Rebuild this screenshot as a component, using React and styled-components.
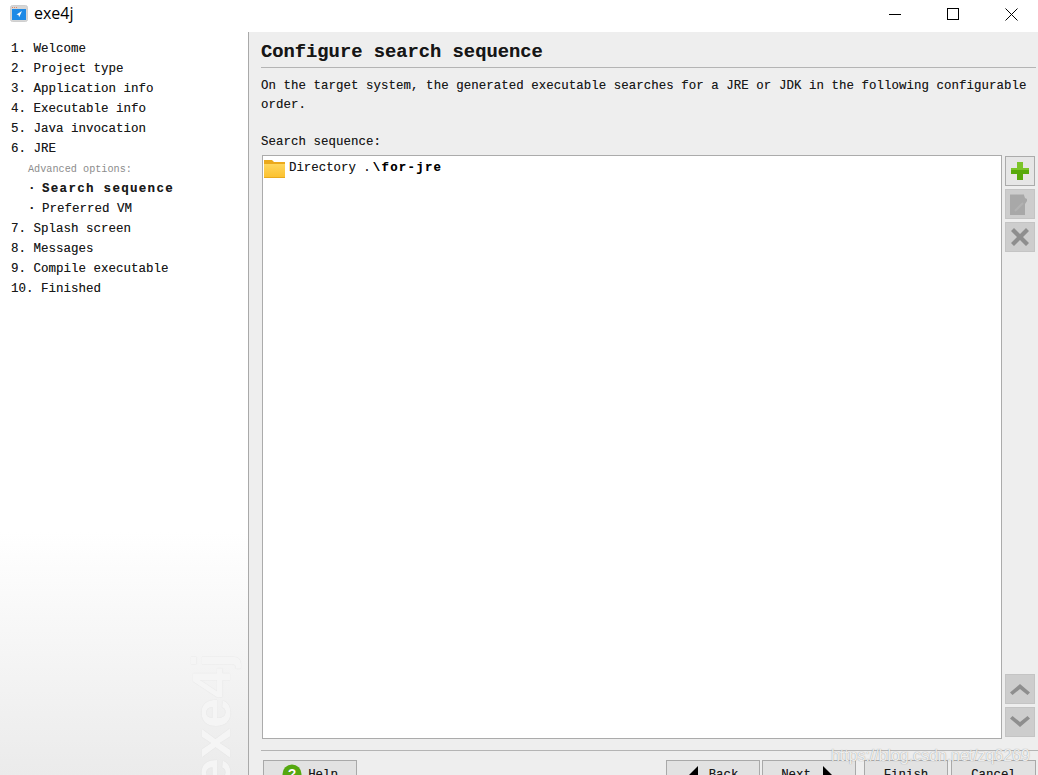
import React from "react";
import styled, { createGlobalStyle } from "styled-components";

const Global = createGlobalStyle`
  html, body { margin: 0; padding: 0; background: #fff; }
  #root { height: 775px; overflow: hidden; }
`;
const mono = `"Liberation Mono", "DejaVu Sans Mono", monospace`;

const Window = styled.div`
  position: relative; width: 1038px; height: 775px; overflow: hidden;
  display: flex; flex-direction: column; background: #fff;
`;
const TitleBar = styled.header`
  height: 32px; flex: none; display: flex; align-items: center; padding: 0 0 4px 10px; box-sizing: border-box;
  font: 16px "Open Sans", "Liberation Sans", sans-serif; color: #000;
`;
const AppName = styled.span`margin: 0 0 3px 6px; flex: 1;`;
const WinButton = styled.div`
  width: 58px; height: 28px; display: flex; align-items: center; justify-content: center;
`;
const WinButtons = styled.div`display: flex; margin-right: -2px; width: 174px;`;
const Body = styled.div`flex: 1; display: flex; min-height: 0;`;
const Sidebar = styled.nav`
  position: relative; width: 249px; flex: none; box-sizing: border-box; overflow: hidden;
  padding: 7px 0 0 11px; border-right: 1px solid #a9a9a9;
  background: linear-gradient(to bottom, #fff 0, #fff 500px, #ebebeb 100%);
`;
const Step = styled.div`
  height: 20px; white-space: pre; color: #1a1a1a; display: flex;
  font: ${p => (p.$active ? "bold" : "normal")} 12.5px/21px ${mono};
  letter-spacing: ${p => (p.$active ? 1.3 : 0)}px;
  padding-left: ${p => (p.$sub ? 17 : 0)}px;
  text-shadow: 0 0 .6px rgba(0,0,0,.45);
`;
const Dot = styled.span`width: 14px; flex: none; font-weight: bold;`;
const Caption = styled.div`
  height: 20px; padding-left: 17px; color: #8c8c8c; font: 10.2px/21px ${mono};
`;
const Watermark = styled.div`
  position: absolute; left: 184px; top: 621px;
  writing-mode: vertical-rl; transform: rotate(180deg);
  font: bold 54px/54px "Liberation Sans", sans-serif; color: #f5f5f5;
  text-shadow: 0 0 1px rgba(0,0,0,.1);
  white-space: nowrap;
`;
const Main = styled.main`
  flex: 1; background: #eeeeee; padding: 0 0 0 12px; min-width: 0; overflow: hidden;
  display: flex; flex-direction: column;
`;
const Heading = styled.h1`
  margin: 9px 2px 0 0; padding-bottom: 4px; height: 22px; border-bottom: 1px solid #b4b4b4; flex: none;
  font: bold 18.8px/22px ${mono}; color: #161616; text-shadow: 0 0 .5px rgba(0,0,0,.4);
`;
const Intro = styled.p`
  margin: 9px 0 0; width: 776px; font: 12.4px/18.5px ${mono}; color: #1a1a1a; flex: none;
  letter-spacing: .07px; text-shadow: 0 0 .6px rgba(0,0,0,.45);
`;
const ListLabel = styled.div`
  margin-top: 19px; font: 12.4px/19px ${mono}; color: #1a1a1a; height: 22px; flex: none;
  letter-spacing: .07px; text-shadow: 0 0 .6px rgba(0,0,0,.45);
`;
const ListRow = styled.div`display: flex; gap: 3px; flex: none; margin-left: 1px;`;
const List = styled.div`
  width: 738px; height: 582px; background: #fff; border: 1px solid #ababab;
`;
const ListItem = styled.div`
  display: flex; align-items: center; height: 20px; margin-top: 2px; padding-left: 1px;
  font: 12.4px/22px ${mono}; color: #1a1a1a; white-space: pre; text-shadow: 0 0 .6px rgba(0,0,0,.45);
`;
const ItemText = styled.span`margin-left: 4px;`;
const Strong = styled.b`font-weight: bold; color: #000; letter-spacing: 1.25px; margin-left: 2px;`;
const Tools = styled.div`display: flex; flex-direction: column; width: 30px; margin: 1px 0 2px;`;
const ToolGroup = styled.div`display: flex; flex-direction: column; gap: 3px;`;
const Spacer = styled.div`flex: 1;`;
const Tool = styled.div`
  width: 30px; height: 30px; box-sizing: border-box; display: flex; align-items: center; justify-content: center;
  background: ${p => (p.$on ? "#e6e6e6" : "#cdcdcd")};
  border: 1px solid ${p => (p.$on ? "#ababab" : "#c4c4c4")};
`;
const Footer = styled.div`
  margin: 11px 0 0; border-top: 1px solid #b4b4b4; padding-top: 9px; display: flex; height: 50px; box-sizing: border-box;
  flex: none;
`;
const Button = styled.div`
  height: 40px; box-sizing: border-box; width: ${p => p.$w}px; margin-left: ${p => p.$ml || 0}px; flex: none;
  display: flex; align-items: flex-start; justify-content: center; gap: ${p => p.$gap ?? 6}px;
  padding: 5px ${p => p.$pr || 0}px 0 0;
  background: #e2e2e2; border: 1px solid #a9a9a9; border-bottom: none;
  font: 12.4px/18px ${mono}; color: #1a1a1a; text-shadow: 0 0 .6px rgba(0,0,0,.45);
`;
const HelpGlyph = styled.span`display: block; margin-top: -2px; height: 20px;`;
const Stamp = styled.div`
  position: absolute; left: 831px; top: 744px;
  font: 16px/24px "Liberation Sans", sans-serif; color: rgba(255,255,255,.85);
  text-shadow: 0 0 1px rgba(110,110,110,.8); white-space: nowrap; letter-spacing: -.05px;
`;

const steps1 = ["1. Welcome","2. Project type","3. Application info","4. Executable info","5. Java invocation","6. JRE"];
const steps2 = ["7. Splash screen","8. Messages","9. Compile executable","10. Finished"];

const AppIcon = () => (
  <svg width="18" height="18" viewBox="0 0 18 18">
    <rect x="0.5" y="0.5" width="17" height="16" rx="2" fill="#d6d6d6" stroke="#cfcfcf" />
    <rect x="2" y="4" width="14" height="11" fill="#1e8ae6" />
    <path d="M2 2.5h5" stroke="#e08a6a" strokeDasharray="1 1" />
    <path d="M12 6 6.500 9.400l2 .7.6 2.200z" fill="#fff" />
  </svg>
);
const Minimize = () => <svg width="12" height="12"><path d="M0 6.500h12" stroke="#000" /></svg>;
const Maximize = () => <svg width="12" height="12"><rect x=".5" y=".5" width="11" height="11" fill="none" stroke="#000" /></svg>;
const Close = () => <svg width="13" height="13"><path d="M.5.500l12 12M12.500.500l-12 12" stroke="#000" /></svg>;
const Folder = () => (
  <svg width="21" height="19" viewBox="0 0 21 19">
    <defs>
      <linearGradient id="folderFill" x1="0" y1="0" x2="0" y2="1">
        <stop offset="0" stopColor="#ffd65c" />
        <stop offset="1" stopColor="#fbc02d" />
      </linearGradient>
    </defs>
    <path d="M0 1h8l2 2h11v16H0z" fill="#eba91c" />
    <path d="M0 5h21v14H0z" fill="url(#folderFill)" />
    <path d="M0 18h21v1H0z" fill="#e8a91e" />
  </svg>
);
const Plus = () => (
  <svg width="20" height="20" viewBox="0 0 20 20">
    <path d="M7 1h6v6h6v6h-6v6H7v-6H1V7h6z" fill="#57a90c" />
    <path d="M7 1h6v6h6v2H7zM1 7h6v2H1z" fill="#7cc42a" />
  </svg>
);
const Note = () => (
  <svg width="22" height="24" viewBox="0 0 22 24">
    <path d="M1 3l1-1 1 1 1-1 1 1 1-1 1 1 1-1 1 1 1-1 1 1 1-1 1 1 1-1 1 1 1 3 2 1v2l-2 3v11H1z" fill="#a8a8a8" />
    <path d="M6 19 14 11" stroke="#b2b2b2" strokeWidth="2" />
  </svg>
);
const Cross = () => <svg width="22" height="22" viewBox="0 0 22 22"><path d="M2 5l3-3 6 6 6-6 3 3-6 6 6 6-3 3-6-6-6 6-3-3 6-6z" fill="#8e8e8e" /></svg>;
const Up = () => <svg width="22" height="14" viewBox="0 0 22 14"><path d="M1 10.500 11 2l10 8.500-2.500 2.500L11 7l-7.500 6z" fill="#8e8e8e" /></svg>;
const Down = () => <svg width="22" height="14" viewBox="0 0 22 14"><path d="M1 3.500 11 12l10-8.500L18.500 1 11 7 3.500 1z" fill="#8e8e8e" /></svg>;
const Help = () => (
  <HelpGlyph>
    <svg width="20" height="20" viewBox="0 0 20 20">
      <circle cx="10" cy="10" r="9.500" fill="#55a80f" />
      <text x="10" y="15" textAnchor="middle" fontFamily="Liberation Sans" fontWeight="bold" fontSize="14" fill="#fff">?</text>
    </svg>
  </HelpGlyph>
);
const Left = () => <svg width="10" height="20" viewBox="0 0 10 20"><path d="M10 0v20L0 10z" fill="#000" /></svg>;
const Right = () => <svg width="10" height="20" viewBox="0 0 10 20"><path d="M0 0v20l10-10z" fill="#000" /></svg>;

export default function App() {
  return (
    <Window>
      <Global />
      <TitleBar>
        <AppIcon />
        <AppName>exe4j</AppName>
        <WinButtons>
          <WinButton><Minimize /></WinButton>
          <WinButton><Maximize /></WinButton>
          <WinButton><Close /></WinButton>
        </WinButtons>
      </TitleBar>
      <Body>
        <Sidebar>
          {steps1.map(s => <Step key={s}>{s}</Step>)}
          <Caption>Advanced options:</Caption>
          <Step $sub $active><Dot>·</Dot>Search sequence</Step>
          <Step $sub><Dot>·</Dot>Preferred VM</Step>
          {steps2.map(s => <Step key={s}>{s}</Step>)}
          <Watermark>exe4j</Watermark>
        </Sidebar>
        <Main>
          <Heading>Configure search sequence</Heading>
          <Intro>On the target system, the generated executable searches for a JRE or JDK in the following configurable order.</Intro>
          <ListLabel>Search sequence:</ListLabel>
          <ListRow>
            <List>
              <ListItem><Folder /><ItemText>Directory .<Strong>\for-jre</Strong></ItemText></ListItem>
            </List>
            <Tools>
              <ToolGroup>
                <Tool $on><Plus /></Tool>
                <Tool><Note /></Tool>
                <Tool><Cross /></Tool>
              </ToolGroup>
              <Spacer />
              <ToolGroup>
                <Tool><Up /></Tool>
                <Tool><Down /></Tool>
              </ToolGroup>
            </Tools>
          </ListRow>
          <Footer>
            <Button $w={94} $ml={2}><Help /> Help</Button>
            <Button $w={94} $ml={309} $gap={11}><Left /> Back</Button>
            <Button $w={94} $ml={2} $gap={12} $pr={4}>Next <Right /></Button>
            <Button $w={84} $ml={8}>Finish</Button>
            <Button $w={85} $ml={3}>Cancel</Button>
          </Footer>
        </Main>
      </Body>
      <Stamp>https://blog.csdn.net/zq6269</Stamp>
    </Window>
  );
}
